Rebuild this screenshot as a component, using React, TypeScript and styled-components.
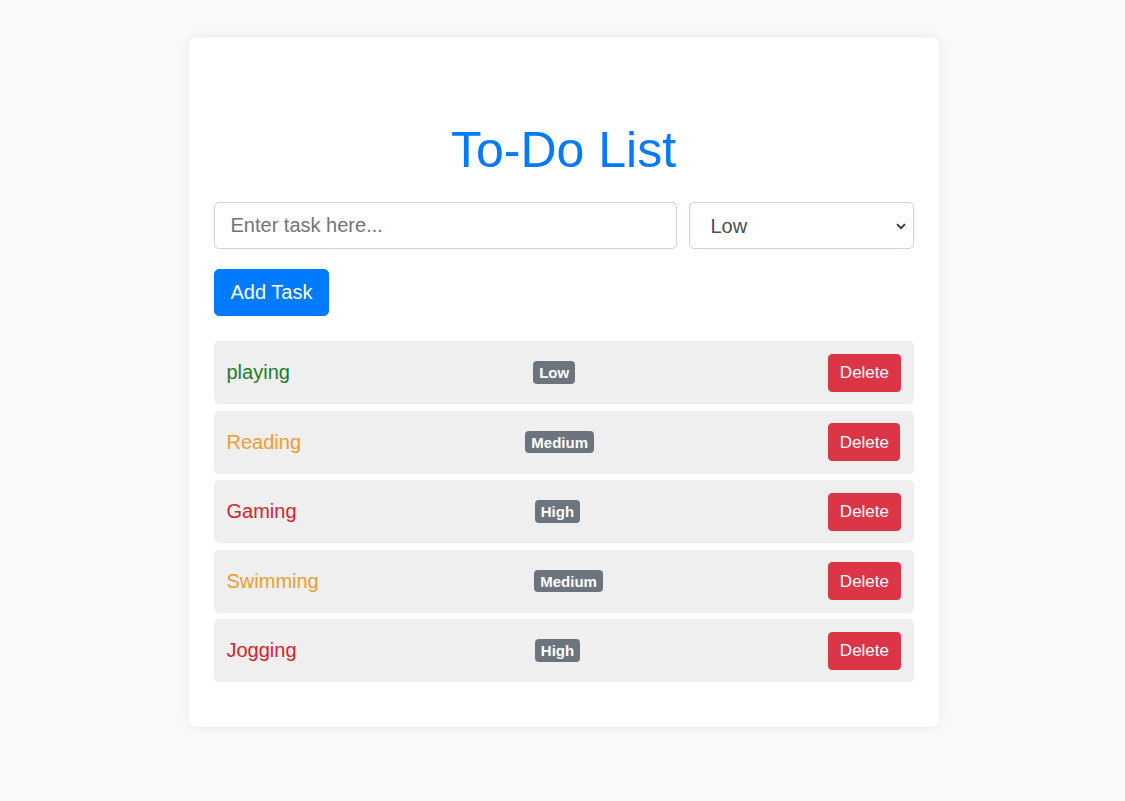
import React, { useState } from "react";
import styled, { createGlobalStyle } from "styled-components";

const GlobalStyle = createGlobalStyle`
  html, body {
    margin: 0;
    padding: 0;
    background: #f8f9fa;
    font-family: "Liberation Sans", Arial, sans-serif;
  }
  * { box-sizing: border-box; }
`;

const Page = styled.div`
  min-height: 801px;
  padding-top: 37px;
  display: flex;
  justify-content: center;
  align-items: flex-start;
`;

const Card = styled.div`
  width: 750px;
  margin-left: 2px;
  background: #ffffff;
  border-radius: 7px;
  box-shadow: 0 0 10px rgba(0, 0, 0, 0.08);
  padding: 25px 25px 45px;
`;

const Title = styled.h1`
  margin: 58px 0 22px;
  text-align: center;
  color: #007bff;
  font-size: 50px;
  font-weight: 400;
  line-height: 1.2;
`;

const FormRow = styled.div`
  display: grid;
  grid-template-columns: 1fr 225px;
  column-gap: 12px;
`;

const TextInput = styled.input`
  height: 47px;
  width: 100%;
  padding: 0 16px;
  font-family: inherit;
  font-size: 20px;
  color: #495057;
  border: 1px solid #ced4da;
  border-radius: 5px;
  background: #fff;
  outline: none;
  &::placeholder { color: #6c757d; }
`;

const SelectWrap = styled.div`
  position: relative;
`;

const Select = styled.select`
  appearance: none;
  -webkit-appearance: none;
  height: 47px;
  width: 100%;
  padding: 0 30px 0 21px;
  font-family: inherit;
  font-size: 20px;
  color: #495057;
  border: 1px solid #ced4da;
  border-radius: 5px;
  background: #fff;
  outline: none;
`;

const Chevron = styled.svg`
  position: absolute;
  right: 8px;
  top: 21px;
  width: 10px;
  height: 7px;
  pointer-events: none;
`;

const AddButton = styled.button`
  margin-top: 20px;
  height: 47px;
  padding: 0 16px;
  font-family: inherit;
  font-size: 20px;
  color: #fff;
  background: #007bff;
  border: 1px solid #007bff;
  border-radius: 5px;
  cursor: pointer;
`;

const List = styled.ul`
  list-style: none;
  margin: 25px 0 0;
  padding: 0;
  display: flex;
  flex-direction: column;
  gap: 6.5px;
`;

const Row = styled.li`
  height: 63px;
  display: flex;
  align-items: center;
  justify-content: space-between;
  padding: 0 13px;
  background: #efefef;
  border-radius: 5px;
`;

const TaskText = styled.span<{ $color: string }>`
  font-size: 20px;
  color: ${(p) => p.$color};
`;

const Badge = styled.span`
  display: inline-block;
  font-size: 15px;
  font-weight: 700;
  line-height: 1;
  padding: 3.75px 6px;
  color: #fff;
  background: #6c757d;
  border-radius: 4px;
`;

const DeleteButton = styled.button`
  margin-left: 10px;
  height: 38px;
  padding: 1px 10.5px 0;
  font-family: inherit;
  font-size: 17px;
  color: #fff;
  background: #dc3545;
  border: 1px solid #dc3545;
  border-radius: 4px;
  cursor: pointer;
`;

type Priority = "Low" | "Medium" | "High";

const colors: Record<Priority, string> = {
  Low: "#1d7d2b",
  Medium: "#f29d2e",
  High: "#d8232b",
};

const initial: { name: string; priority: Priority }[] = [
  { name: "playing", priority: "Low" },
  { name: "Reading", priority: "Medium" },
  { name: "Gaming", priority: "High" },
  { name: "Swimming", priority: "Medium" },
  { name: "Jogging", priority: "High" },
];

export default function App() {
  const [tasks, setTasks] = useState(initial);
  const [text, setText] = useState("");
  const [priority, setPriority] = useState<Priority>("Low");

  const add = () => {
    if (!text.trim()) return;
    setTasks([...tasks, { name: text.trim(), priority }]);
    setText("");
  };

  return (
    <>
      <GlobalStyle />
      <Page>
        <Card>
          <Title>To-Do List</Title>
          <FormRow>
            <TextInput
              placeholder="Enter task here..."
              value={text}
              onChange={(e) => setText(e.target.value)}
            />
            <SelectWrap>
              <Select
                value={priority}
                onChange={(e) => setPriority(e.target.value as Priority)}
              >
                <option>Low</option>
                <option>Medium</option>
                <option>High</option>
              </Select>
              <Chevron viewBox="0 0 10 7">
                <path d="M1 1.2 L5 5.2 L9 1.2" fill="none" stroke="#333" strokeWidth="1.8" />
              </Chevron>
            </SelectWrap>
          </FormRow>
          <AddButton onClick={add}>Add Task</AddButton>
          <List>
            {tasks.map((t, i) => (
              <Row key={i}>
                <TaskText $color={colors[t.priority]}>{t.name}</TaskText>
                <Badge>{t.priority}</Badge>
                <DeleteButton onClick={() => setTasks(tasks.filter((_, j) => j !== i))}>
                  Delete
                </DeleteButton>
              </Row>
            ))}
          </List>
        </Card>
      </Page>
    </>
  );
}
